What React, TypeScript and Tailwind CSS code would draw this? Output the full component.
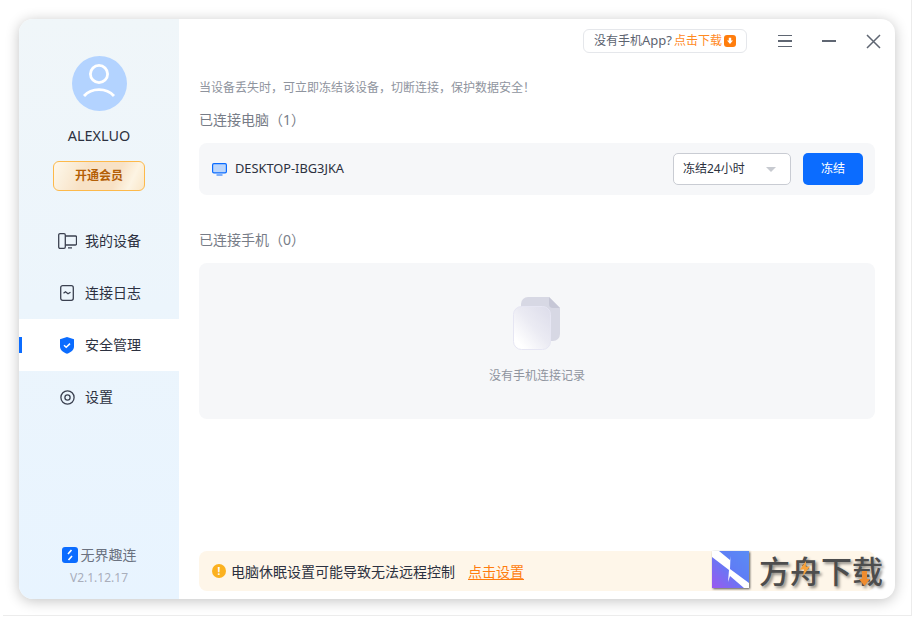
import React from "react";

const font = { fontFamily: '"Noto Sans", "Noto Sans CJK SC", sans-serif' };

function DeviceIcon() {
  return (
    <svg width="19" height="16" viewBox="0 0 19 16" fill="none" stroke="#3b4150" strokeWidth="1.3">
      <rect x="0.7" y="0.7" width="6.6" height="14.6" rx="1.3" />
      <path d="M7.3 3H17.5a1 1 0 0 1 1 1v7a1 1 0 0 1-1 1H7.3" />
      <path d="M10 14.8h4" />
    </svg>
  );
}
function LogIcon() {
  return (
    <svg width="14" height="16" viewBox="0 0 14 16" fill="none" stroke="#3b4150" strokeWidth="1.3">
      <rect x="0.7" y="0.7" width="12.6" height="14.6" rx="2" />
      <path d="M3.5 8.2 5.5 6.8 8 8.8 10.5 7.2" />
    </svg>
  );
}
function ShieldIcon() {
  return (
    <svg width="14" height="17" viewBox="0 0 14 17">
      <path d="M0 2.2 7 0l7 2.2V9.5c0 3.6-3.2 6-7 7.3-3.8-1.3-7-3.7-7-7.3Z" fill="#0b6cff" />
      <path d="M4 8.2 6.2 10.2 10 6.6" fill="none" stroke="#fff" strokeWidth="1.5" />
    </svg>
  );
}
function GearIcon() {
  return (
    <svg width="15" height="15" viewBox="0 0 15 15" fill="none" stroke="#3b4150" strokeWidth="1.3">
      <circle cx="7.5" cy="7.5" r="6.6" />
      <circle cx="7.5" cy="7.5" r="2.6" />
    </svg>
  );
}

function NavItem({ icon, label, active }: { icon: React.ReactNode; label: string; active?: boolean }) {
  return (
    <div className={`relative flex h-[52px] items-center ${active ? "bg-white" : ""}`}>
      {active && <span className="absolute left-0 top-[18px] h-4 w-[3px] bg-[#0b6cff]" />}
      <span className="flex w-[66px] justify-end pr-[8px]">
        <span className="flex w-[20px] justify-center">{icon}</span>
      </span>
      <span className="text-[14px] leading-none text-[#2c3140]">{label}</span>
    </div>
  );
}

export default function App() {
  return (
    <div className="relative h-[619px] w-[915px] overflow-hidden bg-white p-[19px_19px_20px_19px]" style={font}>
      <div className="pointer-events-none absolute bottom-[3px] left-[3px] right-[3px] top-0 border-b border-r border-[#ececec]" />
      <div className="relative flex h-[580px] w-[876px] overflow-hidden rounded-[14px] bg-white shadow-[0_2px_14px_rgba(0,0,0,0.24)]">
        {/* Sidebar */}
        <aside className="flex w-[160px] shrink-0 flex-col bg-gradient-to-b from-[#f0f6f9] to-[#e8f4ff]">
          <div className="flex flex-col items-center pt-[37px]">
            <svg width="55" height="55" viewBox="0 0 55 55" fill="none">
              <circle cx="27.5" cy="27.5" r="27.5" fill="#b3d3ff" />
              <circle cx="27" cy="18" r="8.6" stroke="#fff" strokeWidth="2.8" />
              <path d="M12 40c4-4.400 9-6.300 15-6.300s11 1.900 15 6.300" stroke="#fff" strokeWidth="2.8" />
            </svg>
            <div className="mt-[15px] text-[14.4px] leading-[20px] text-[#2c3140]">ALEXLUO</div>
            <div className="mt-[15px] flex h-[30px] w-[92px] items-center justify-center rounded-[6px] border-[1.5px] border-[#fdb94a] bg-[linear-gradient(115deg,#fff8ec_0%,#fbf0dd_14%,#f8e2c6_36%,#f8e2c6_68%,#fdf4e3_84%,#f9e6c8_100%)] text-[12px] font-bold text-[#b45f06]">
              开通会员
            </div>
          </div>
          <nav className="mt-[24px] flex flex-col">
            <NavItem icon={<DeviceIcon />} label="我的设备" />
            <NavItem icon={<LogIcon />} label="连接日志" />
            <NavItem icon={<ShieldIcon />} label="安全管理" active />
            <NavItem icon={<GearIcon />} label="设置" />
          </nav>
          <div className="mt-auto flex flex-col items-center pb-[12px]">
            <div className="flex items-center gap-[3px]">
              <span className="flex h-4 w-4 items-center justify-center rounded-[3px] bg-[#0b6cff]">
                <svg width="10" height="12" viewBox="0 0 10 12" fill="none" stroke="#fff" strokeWidth="1.6">
                  <path d="M6.500 1 3 5M7 7 3.500 11" />
                </svg>
              </span>
              <span className="text-[14px] leading-[20px] text-[#6b7280]">无界趣连</span>
            </div>
            <div className="mt-[4px] text-[12px] leading-[18px] text-[#a9aebb]">V2.1.12.17</div>
          </div>
        </aside>

        {/* Main */}
        <main className="flex min-w-0 flex-1 flex-col px-[20px]">
          <header className="mr-[-5px] flex h-[44px] items-center justify-end">
            <div className="mr-[31px] flex h-[24px] w-[164px] items-center justify-center rounded-[6px] border border-[#e5e7eb] text-[12px] text-[#5c6370]">
              <span>没有手机<span className="text-[13px]">App?</span></span>
              <span className="ml-[2px] text-[#ff8a1f]">点击下载</span>
              <span className="ml-[2px] flex h-[12px] w-[12px] items-center justify-center rounded-[3px] bg-[#ff7d0d]">
                <svg width="8" height="8" viewBox="0 0 8 8" fill="#fff">
                  <path d="M2.800 0.800h2.400V3.600H7L4 7 1 3.600h1.800Z" />
                </svg>
              </span>
            </div>
            <div className="mr-[30px] flex w-[14px] flex-col gap-[4px]">
              <span className="h-[1.5px] bg-[#5f6672]" />
              <span className="h-[1.5px] bg-[#5f6672]" />
              <span className="h-[1.5px] bg-[#5f6672]" />
            </div>
            <span className="mr-[30px] h-[1.5px] w-[14px] bg-[#5f6672]" />
            <svg className="mr-[-1px]" width="15" height="15" viewBox="0 0 15 15" stroke="#5f6672" strokeWidth="1.5">
              <path d="M1 1 14 14M14 1 1 14" />
            </svg>
          </header>

          <p className="mt-[16px] text-[12px] leading-[18px] text-[#8f949e]">当设备丢失时，可立即冻结该设备，切断连接，保护数据安全！</p>
          <h2 className="mt-[13px] text-[14px] font-normal leading-[20px] text-[#777c87]">已连接电脑（1）</h2>
          <div className="mt-[13px] flex h-[52px] items-center rounded-[8px] bg-[#f6f7f9] pl-[13px] pr-[12px]">
            <svg width="15" height="13" viewBox="0 0 15 13">
              <rect x="0.6" y="0.6" width="13.8" height="9.3" rx="1.3" fill="#bcd6fb" stroke="#0b6cff" strokeWidth="1.2" />
              <path d="M4.500 12h6" stroke="#0b6cff" strokeWidth="1.2" />
            </svg>
            <span className="ml-[8px] text-[12.800px] text-[#2c3140]">DESKTOP-IBG3JKA</span>
            <div className="ml-auto flex h-[32px] w-[118px] items-center justify-between rounded-[5px] border border-[#c9ccd3] bg-white pl-[9px] pr-[14px] text-[12px] text-[#2c3140]">
              <span>冻结24小时</span>
              <span className="h-0 w-0 border-x-[5px] border-t-[5px] border-x-transparent border-t-[#c7cad0]" />
            </div>
            <button className="ml-[12px] h-[32px] w-[60px] rounded-[5px] bg-[#0b6cff] text-[12px] text-white">冻结</button>
          </div>

          <h2 className="mt-[35px] text-[14px] font-normal leading-[20px] text-[#777c87]">已连接手机（0）</h2>
          <div className="mt-[13px] flex h-[156px] flex-col items-center rounded-[8px] bg-[#f6f7f9] pt-[33px]">
            <svg width="48" height="54" viewBox="0 0 48 54">
              <defs>
                <linearGradient id="front" x1="1" y1="0" x2="0.15" y2="0.85">
                  <stop offset="0" stopColor="#dcdcea" />
                  <stop offset="0.55" stopColor="#ebebf3" />
                  <stop offset="1" stopColor="#ffffff" />
                </linearGradient>
              </defs>
              <path d="M15 1H36L47 12V38a7 7 0 0 1-7 7H15a7 7 0 0 1-7-7V8a7 7 0 0 1 7-7Z" fill="#d7d8e4" />
              <path d="M36 1 47 12H40a4 4 0 0 1-4-4Z" fill="#c6c7d6" />
              <rect x="0.500" y="10.500" width="37" height="43" rx="8" fill="url(#front)" stroke="#e6e6f3" />
            </svg>
            <div className="mt-[17px] text-[12px] leading-[18px] text-[#8f949e]">没有手机连接记录</div>
          </div>

          <div className="mb-[8px] mt-auto flex h-[40px] items-center rounded-[8px] bg-[#fef6e9] pl-[13px] text-[14px] text-[#2c3140]">
            <span className="flex h-[14px] w-[14px] items-center justify-center rounded-full bg-[#fbb11f] text-[10px] font-bold leading-none text-white">!</span>
            <span className="ml-[5px]">电脑休眠设置可能导致无法远程控制</span>
            <span className="ml-[13px] text-[#ff7d0d] underline underline-offset-2">点击设置</span>
          </div>
        </main>
      </div>

      {/* Watermark */}
      <div className="absolute left-[712px] top-[551px] flex items-start">
        <svg width="38" height="38" viewBox="0 0 38 38" className="drop-shadow-[1px_1px_1px_rgba(0,0,0,0.65)]">
          <defs>
            <linearGradient id="wm" x1="0" y1="1" x2="1" y2="0">
              <stop offset="0" stopColor="#9a58ef" />
              <stop offset="0.55" stopColor="#5f7df5" />
              <stop offset="1" stopColor="#5a8cf5" />
            </linearGradient>
          </defs>
          <rect width="37" height="37" fill="url(#wm)" />
          <path d="M0 0H7L18 9 18.500 5 18 18 37 32V37H32L18 25 16 31 17 19 0 6Z" fill="#fff" />
        </svg>
        <div className="relative ml-[9px] mt-[3px]">
          <span
            className="block whitespace-nowrap text-[31px] font-medium leading-none text-[#4d4d4d]"
            style={{ textShadow: "2px 2px 3px rgba(0,0,0,0.45)", fontFamily: '"Noto Sans CJK SC", sans-serif' }}
          >
            方舟下载
          </span>
          <svg className="absolute left-[41px] top-[7px]" width="10" height="15" viewBox="0 0 10 15" fill="#f7a23b">
            <path d="M6 0 0 8.500H4L3 15 10 5.500H5.800Z" />
          </svg>
          <svg className="absolute left-[100px] top-[17px]" width="11" height="15" viewBox="0 0 11 15" fill="#f08c2e">
            <path d="M3 0H8V8H11L5.500 15 0 8H3Z" />
          </svg>
        </div>
      </div>
    </div>
  );
}
